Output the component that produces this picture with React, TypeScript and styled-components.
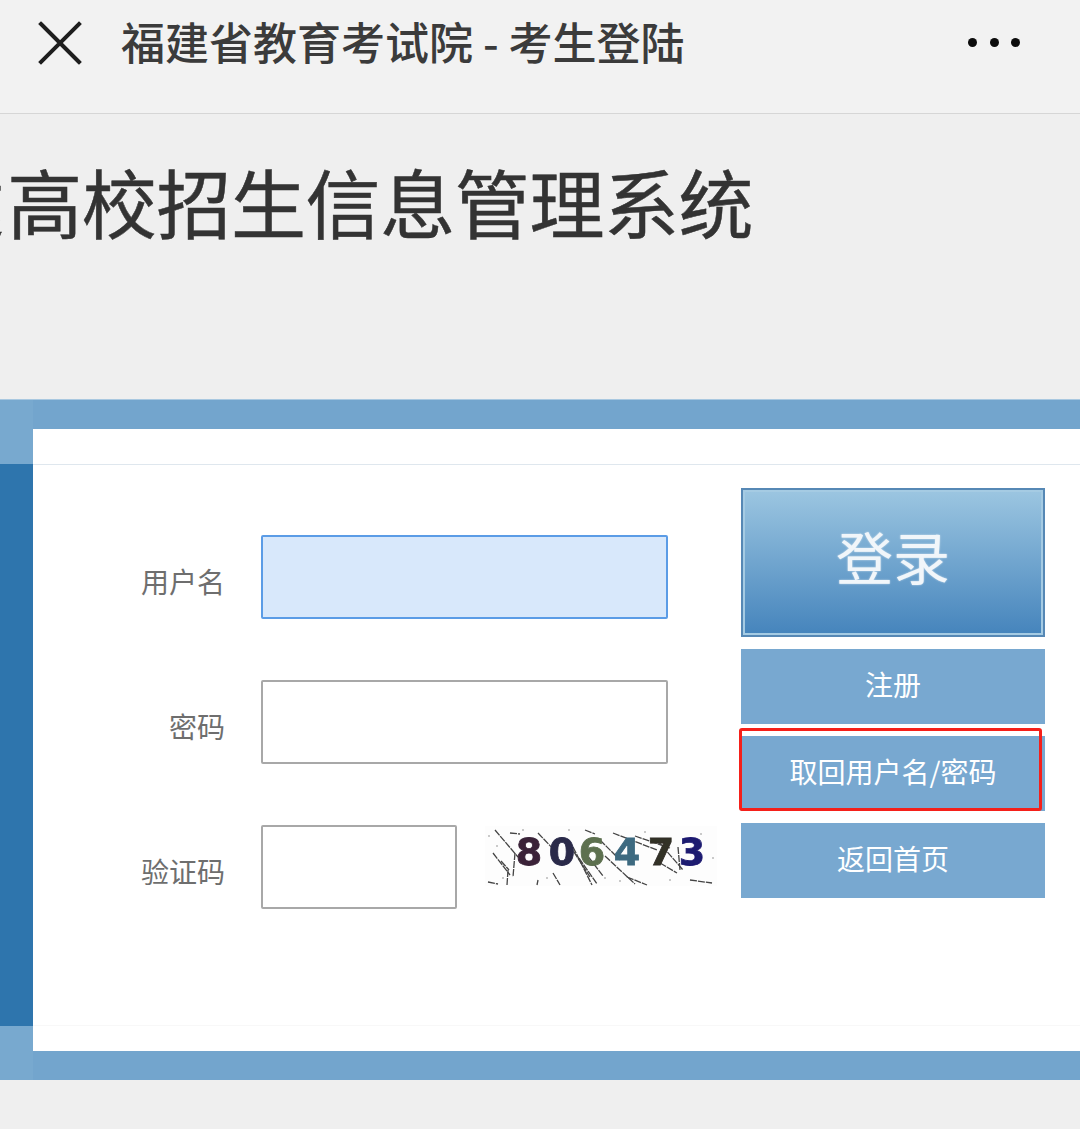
import React from 'react';
import styled, { createGlobalStyle } from 'styled-components';

const CJK = '"Noto Sans CJK SC", "Noto Sans", sans-serif';

const GlobalStyle = createGlobalStyle`
  html, body {
    margin: 0;
    padding: 0;
    height: 1129px;
    overflow: hidden;
    background: #efefef;
    font-family: ${CJK};
  }
  * {
    box-sizing: border-box;
  }
`;

const Page = styled.div`
  width: 1080px;
  height: 1129px;
  overflow: hidden;
`;

const NavBar = styled.header`
  display: flex;
  align-items: center;
  height: 114px;
  padding: 0 0 28px 38px;
  background: #f2f2f2;
  border-bottom: 1px solid #d6d6d6;
`;

const NavTitle = styled.div`
  flex: 1;
  margin-left: 39px;
  padding-bottom: 4px;
  font-size: 44px;
  font-weight: 500;
  line-height: 60px;
  color: #3b3b3b;
  white-space: nowrap;
`;

const MoreDots = styled.div`
  display: flex;
  gap: 12.3px;
  margin-right: 60px;
  > i {
    display: block;
    width: 9px;
    height: 9px;
    border-radius: 50%;
    background: #0c0c0c;
  }
`;

const TitleArea = styled.div`
  height: 285px;
  padding-top: 33px;
  overflow: hidden;
`;

const SystemTitle = styled.h1`
  margin: 0 0 0 -145px;
  font-size: 75px;
  font-weight: 400;
  line-height: 108px;
  color: #333333;
  white-space: nowrap;
  letter-spacing: -0.4px;
  -webkit-text-stroke: 0.5px #333333;
`;

const ClippedLead = styled.span`
  margin-right: 3px;
`;

const Panel = styled.section`
  display: grid;
  grid-template-columns: 33px 1fr;
  height: 681px;
  background: #73a5cd;
  border-top: 1px solid #a9c8e0;
`;

const Rail = styled.div`
  padding: 64px 0 54px;
  background: #78a9cf;
  > div {
    height: 100%;
    background: #2e75ad;
  }
`;

const Sheet = styled.div`
  margin: 29px 0 29px;
  background: #ffffff;
  display: flex;
  flex-direction: column;
`;

const SheetHead = styled.div`
  height: 36px;
  flex: none;
  border-bottom: 1px solid #dfe7ee;
`;

const SheetBody = styled.div`
  flex: 1;
  display: flex;
  align-items: flex-start;
  border-bottom: 1px solid #f8f8f8;
`;

const SheetFoot = styled.div`
  height: 25px;
  flex: none;
`;

const Form = styled.div`
  display: grid;
  grid-template-columns: 192px 456px;
  column-gap: 36px;
  row-gap: 61px;
  padding-top: 70px;
`;

const Label = styled.label`
  padding-top: 23px;
  text-align: right;
  font-size: 28px;
  line-height: 46px;
  color: #6e6e6e;
`;

const Field = styled.div<{ $small?: boolean; $active?: boolean }>`
  width: ${(p) => (p.$small ? '196px' : '407px')};
  height: 84px;
  border: 2px solid ${(p) => (p.$active ? '#5b9ce6' : '#a8a8a8')};
  border-radius: 2px;
  background: ${(p) => (p.$active ? '#d8e8fb' : '#ffffff')};
`;

const CaptchaRow = styled.div`
  display: flex;
  align-items: flex-start;
  gap: 28px;
`;

const Captcha = styled.svg`
  display: block;
  width: 232px;
  height: 60px;
  margin-top: 1px;
  background: #fdfdfd;
`;

const Actions = styled.div`
  display: flex;
  flex-direction: column;
  gap: 12px;
  width: 304px;
  margin: 23px 0 0 24px;
`;

const LoginButton = styled.button`
  height: 149px;
  padding: 0 0 14px;
  border: 2px solid #5688b5;
  background: linear-gradient(#9cc6e1, #4584bc);
  box-shadow: inset 0 0 0 2px #a5cbe3;
  color: #f1f6fa;
  font-family: ${CJK};
  font-size: 57px;
  font-weight: 400;
  line-height: 1;
  text-shadow: 0 0 2px rgba(255, 255, 255, 0.7);
`;

const ActionButton = styled.button`
  position: relative;
  height: 75px;
  padding: 0 0 6px;
  border: 0;
  background: #78a8d0;
  color: #ffffff;
  font-family: ${CJK};
  font-size: 28px;
`;

const RedOutline = styled.span`
  position: absolute;
  left: -2px;
  top: -8px;
  width: 303px;
  height: 83px;
  border: 3px solid #f5201a;
  border-radius: 3px;
`;

const noiseLines = [
  [10, 4, 33, 31], [8, 27, 25, 49], [25, 7, 35, 8], [3, 56, 13, 58], [23, 44, 22, 59],
  [30, 27, 28, 51], [53, 54, 52, 59], [68, 47, 75, 59], [53, 7, 72, 27], [80, 12, 105, 51],
  [88, 21, 107, 59], [100, 4, 110, 8], [115, 14, 135, 34], [128, 7, 172, 24], [142, 51, 162, 59],
  [172, 14, 198, 44], [175, 37, 192, 47], [205, 54, 227, 57], [193, 21, 195, 44], [94, 32, 112, 58],
  [16, 35, 24, 44], [99, 25, 118, 50], [120, 30, 150, 58], [150, 10, 185, 22],
];

const specks = [
  [4, 10], [18, 52], [38, 4], [62, 52], [84, 4], [120, 52], [160, 6], [185, 54], [216, 8], [228, 32], [12, 20], [135, 55],
];

const digits: [string, number, string][] = [
  ['8', 44, '#3a2238'],
  ['0', 77, '#2a2a4a'],
  ['6', 107, '#5d7050'],
  ['4', 142, '#3d6a80'],
  ['7', 176, '#333028'],
  ['3', 207, '#1c1a70'],
];

const CaptchaImage = () => (
  <Captcha viewBox="0 0 232 60">
    <defs>
      <filter id="soft">
        <feGaussianBlur stdDeviation="0.6" />
      </filter>
    </defs>
    <g filter="url(#soft)">
      {specks.map(([x, y], i) => (
        <circle key={i} cx={x} cy={y} r="0.8" fill="#888" />
      ))}
      {noiseLines.map(([x1, y1, x2, y2], i) => (
        <line key={i} x1={x1} y1={y1} x2={x2} y2={y2} stroke="#444" strokeWidth="1.3" strokeDasharray="7 1" />
      ))}
      {digits.map(([d, x, color]) => (
        <text
          key={d}
          x={x}
          y={39}
          fill={color}
          stroke={color}
          strokeWidth="0.8"
          fontFamily='"DejaVu Sans", sans-serif'
          fontWeight="700"
          fontSize="38"
          textAnchor="middle"
        >
          {d}
        </text>
      ))}
    </g>
  </Captcha>
);

export default function App() {
  return (
    <Page>
      <GlobalStyle />
      <NavBar>
        <svg width="44" height="44" viewBox="0 0 44 44">
          <path d="M3 3 L41 41 M41 3 L3 41" stroke="#1e1e1e" strokeWidth="4" strokeLinecap="square" fill="none" />
        </svg>
        <NavTitle>福建省教育考试院 - 考生登陆</NavTitle>
        <MoreDots>
          <i />
          <i />
          <i />
        </MoreDots>
      </NavBar>
      <TitleArea>
        <SystemTitle>
          <ClippedLead>福建</ClippedLead>高校招生信息管理系统
        </SystemTitle>
      </TitleArea>
      <Panel>
        <Rail>
          <div />
        </Rail>
        <Sheet>
          <SheetHead />
          <SheetBody>
            <Form>
              <Label>用户名</Label>
              <Field $active />
              <Label>密码</Label>
              <Field />
              <Label>验证码</Label>
              <CaptchaRow>
                <Field $small />
                <CaptchaImage />
              </CaptchaRow>
            </Form>
            <Actions>
              <LoginButton>登录</LoginButton>
              <ActionButton>注册</ActionButton>
              <ActionButton>
                取回用户名/密码
                <RedOutline />
              </ActionButton>
              <ActionButton>返回首页</ActionButton>
            </Actions>
          </SheetBody>
          <SheetFoot />
        </Sheet>
      </Panel>
    </Page>
  );
}
